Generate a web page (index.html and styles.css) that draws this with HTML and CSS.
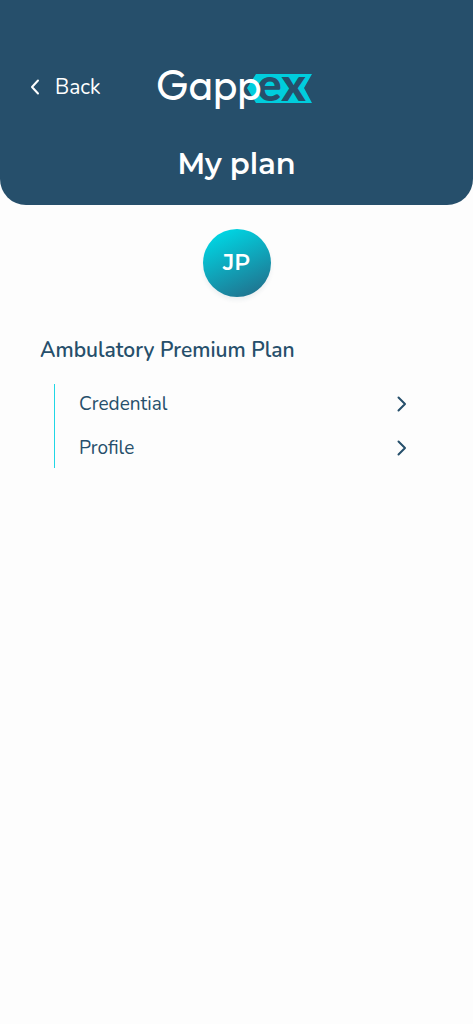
FILE: index.html
```html
<!DOCTYPE html>
<html lang="en">
<head>
<meta charset="utf-8">
<meta name="viewport" content="width=device-width, initial-scale=1">
<title>My plan</title>
<link rel="stylesheet" href="styles.css">
</head>
<body>
<header class="header">
  <div class="topbar">
    <button class="back" type="button">
      <svg class="back-icon" viewBox="0 0 10 16" aria-hidden="true"><path d="M8 1.5 2 8l6 6.500"/></svg>
      <span>Back</span>
    </button>
    <svg class="logo" viewBox="0 0 158 50" role="img" aria-label="Gappex">
      <path class="logo-ribbon" d="M89 26 98 12H154L146 26 154 41H98Z"/>
      <text class="logo-ex" x="99" y="39">ex</text>
      <text class="logo-gapp" x="-2" y="38">Gapp</text>
    </svg>
  </div>
  <h1 class="title">My plan</h1>
</header>
<main class="content">
  <div class="avatar">JP</div>
  <h2 class="plan">Ambulatory Premium Plan</h2>
  <nav class="menu">
    <a class="item" href="#credential"><span>Credential</span>
      <svg class="chevron" viewBox="0 0 10 16" aria-hidden="true"><path d="M1.500 1.500 8 8l-6.500 6.500"/></svg></a>
    <a class="item" href="#profile"><span>Profile</span>
      <svg class="chevron" viewBox="0 0 10 16" aria-hidden="true"><path d="M1.500 1.500 8 8l-6.500 6.500"/></svg></a>
  </nav>
</main>
</body>
</html>
```

FILE: styles.css
```css
* { box-sizing: border-box; }
body {
  margin: 0;
  background: #fdfdfd;
  color: #264f6b;
  font-family: Nunito, "Noto Sans", sans-serif;
}
.header {
  padding: 62px 30px 24px;
  background: #264f6b;
  color: #fff;
  border-radius: 0 0 26px 26px;
}
.topbar {
  display: grid;
  grid-template-columns: 1fr 158px 1fr;
  align-items: center;
}
.back {
  display: flex;
  align-items: center;
  justify-self: start;
  gap: 15px;
  padding: 0;
  border: 0;
  background: none;
  color: inherit;
  font: 400 21px/28px Nunito, "Noto Sans", sans-serif;
  cursor: pointer;
}
.back-icon, .chevron {
  width: 10px;
  height: 16px;
  fill: none;
  stroke: currentColor;
  stroke-width: 2;
  stroke-linecap: round;
  stroke-linejoin: round;
}
.logo { width: 158px; height: 50px; overflow: visible; }
.logo-ribbon { fill: #00cddd; }
.logo-ex { font: 900 46px Lato, sans-serif; fill: #264f6b; }
.logo-gapp { font: 400 42px Outfit, Urbanist, Lato, sans-serif; fill: #fff; }
.title {
  margin: 34px 0 0;
  text-align: center;
  font: 600 29px/35px Montserrat, Inter, sans-serif;
}
.content { padding: 24px 40px; }
.avatar {
  display: grid;
  place-items: center;
  width: 68px;
  height: 68px;
  margin: 0 auto;
  border-radius: 50%;
  background: linear-gradient(155deg, #00d4e2 12%, #207490 90%);
  box-shadow: 0 3px 4px #264f6b14;
  color: #fff;
  font: 600 22px/28px Montserrat, Inter, sans-serif;
}
.plan {
  margin: 40px 0 19px;
  font-size: 21px;
  line-height: 26px;
  padding-bottom: 2px;
  font-weight: 650;
}
.menu {
  margin: 0 26px 0 14px;
  padding-left: 24px;
  border-left: 1px solid #20d7e5;
}
.item {
  display: flex;
  align-items: center;
  justify-content: space-between;
  height: 40px;
  color: inherit;
  text-decoration: none;
  font-size: 19px;
  line-height: 28px;
  font-weight: 400;
}
.item + .item { margin-top: 4px; }
```
